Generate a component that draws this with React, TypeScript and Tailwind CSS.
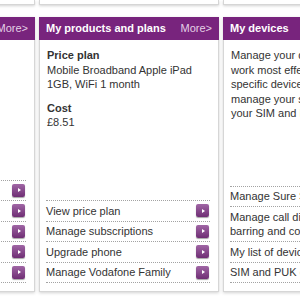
import React from 'react'

type LinkItem = { lines: string[] }

type CardProps = {
  title: string
  more?: boolean
  links: LinkItem[]
  children?: React.ReactNode
}

const ArrowButton: React.FC = () => (
  <span className="mr-[1px] flex h-[13px] w-[13px] shrink-0 items-center justify-center rounded-[2px] bg-linear-to-b from-[#a066a5] to-[#6f2e74] shadow-[0_1px_1px_rgba(0,0,0,0.35)]">
    <span className="ml-[1px] h-0 w-0 border-y-[2.5px] border-l-[3px] border-y-transparent border-l-white" />
  </span>
)

const Card: React.FC<CardProps> = ({ title, more, links, children }) => {
  return (
    <div className="flex h-[275px] w-[180px] shrink-0 flex-col shadow-[0_1px_3px_rgba(0,0,0,0.18)]">
      <div className="flex h-[23px] shrink-0 items-center justify-between whitespace-nowrap bg-[#78247d] px-[7px] text-[11px]">
        <span className="font-bold text-white">{title}</span>
        {more && <span className="text-[#e4d0e6]">More&gt;</span>}
      </div>
      <div className="flex min-h-0 flex-1 flex-col border-x border-b border-[#d6d6d6] bg-white pb-[8px]">
        <div className="whitespace-nowrap px-[7px] pt-[8px] text-[11px] leading-[14.5px] text-[#333]">{children}</div>
        <ul className="mt-auto ml-[6px] mr-[8px] border-t border-dotted border-[#a3a3a3] text-[11px] leading-[14.5px] text-[#333]">
          {links.map((l, i) => (
            <li key={i} className="flex items-center justify-between gap-2 border-b border-dotted border-[#a3a3a3] py-[2.5px]">
              <span className="whitespace-nowrap">
                {l.lines.map((t, j) => (
                  <React.Fragment key={j}>
                    {j > 0 && <br />}
                    {t}
                  </React.Fragment>
                ))}
              </span>
              <ArrowButton />
            </li>
          ))}
        </ul>
      </div>
    </div>
  )
}

const TopStub: React.FC = () => (
  <div className="h-[5px] w-[180px] shrink-0 border-x border-b border-[#d6d6d6] bg-white shadow-[0_1px_3px_rgba(0,0,0,0.18)]" />
)

export default function App() {
  return (
    <div className="h-[300px] w-[300px] overflow-hidden bg-white font-['Liberation_Sans',Arial,sans-serif]">
      <div className="ml-[-145px] flex gap-[4px]">
        <TopStub />
        <TopStub />
        <TopStub />
      </div>

      <div className="ml-[-145px] mt-[12px] flex gap-[4px]">
        <Card
          title="My account"
          more
          links={[
            { lines: ['View my bill'] },
            { lines: ['Pay my bill'] },
            { lines: ['Manage payment details'] },
            { lines: ['Change my details'] },
            { lines: ['Usage since last bill'] },
          ]}
        >
          <div className="font-bold">Account</div>
          <div>Pay monthly</div>
        </Card>

        <Card
          title="My products and plans"
          more
          links={[
            { lines: ['View price plan'] },
            { lines: ['Manage subscriptions'] },
            { lines: ['Upgrade phone'] },
            { lines: ['Manage Vodafone Family'] },
          ]}
        >
          <div className="font-bold">Price plan</div>
          <div>Mobile Broadband Apple iPad</div>
          <div>1GB, WiFi 1 month</div>
          <div className="mt-[9px] font-bold">Cost</div>
          <div>£8.51</div>
        </Card>

        <Card
          title="My devices"
          links={[
            { lines: ['Manage Sure Signal'] },
            { lines: ['Manage call diverts,', 'barring and controls'] },
            { lines: ['My list of devices'] },
            { lines: ['SIM and PUK codes'] },
          ]}
        >
          <div>
            Manage your devices so they
            <br />
            work most effectively. Set up
            <br />
            specific device settings,
            <br />
            manage your security and find
            <br />
            your SIM and PUK codes.
          </div>
        </Card>
      </div>
    </div>
  )
}
